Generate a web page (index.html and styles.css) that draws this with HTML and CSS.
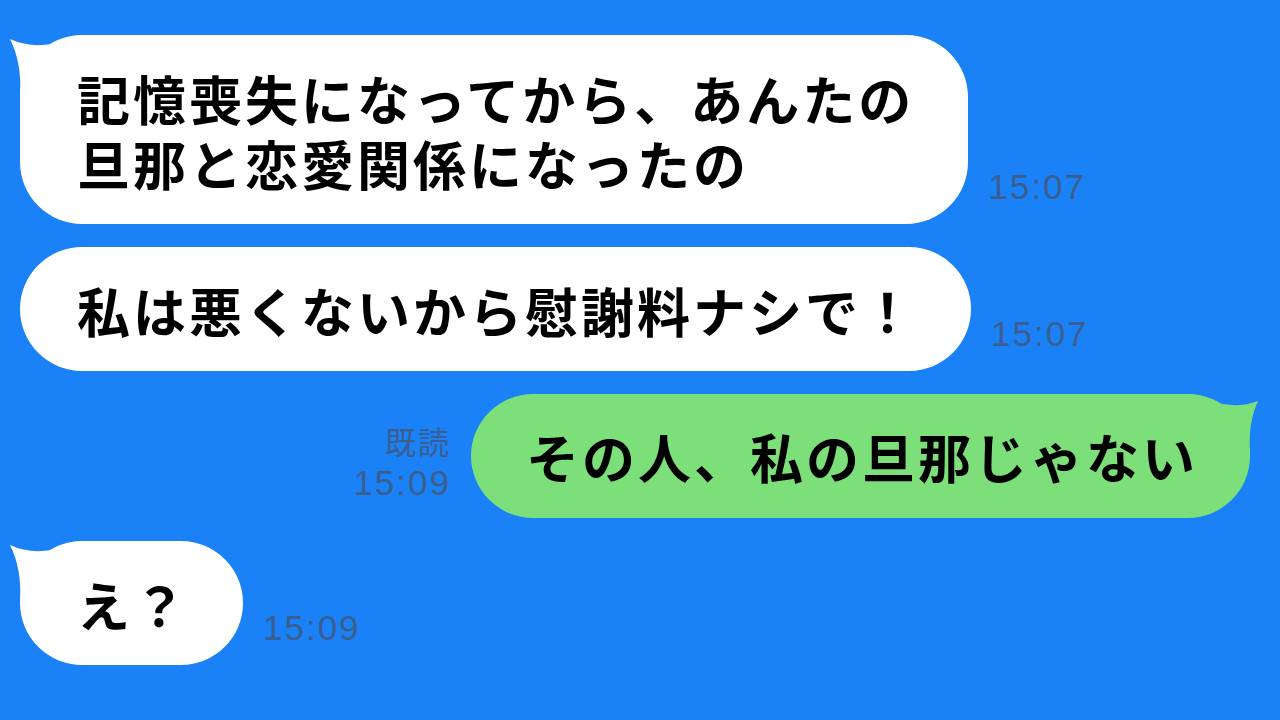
FILE: index.html
```html
<!DOCTYPE html>
<html lang="ja">
<head>
  <meta charset="UTF-8" />
  <meta name="viewport" content="width=device-width, initial-scale=1.0" />
  <title>トーク</title>
  <link rel="stylesheet" href="styles.css">
</head>
<body>
  <div class="chat">
    <div class="row">
      <div class="bubble them">
        <svg class="tail-left" width="70" height="60" viewBox="0 0 70 60"><path d="M0 4 Q30 18 70 0 L70 60 L10 60 Q12 28 0 4 Z" /></svg>
        <span class="text">記憶喪失になってから、あんたの<br>旦那と恋愛関係になったの</span>
      </div>
      <div class="meta">15:07</div>
    </div>

    <div class="row">
      <div class="bubble them"><span class="text">私は悪くないから慰謝料ナシで！</span></div>
      <div class="meta">15:07</div>
    </div>

    <div class="row mine">
      <div class="meta right">
        <span class="read">既読</span>
        <span>15:09</span>
      </div>
      <div class="bubble me">
        <svg class="tail-right" width="70" height="60" viewBox="0 0 70 60"><path d="M68 7 Q40 18 0 0 L0 60 L60 60 Q58 28 68 7 Z" /></svg>
        <span class="text">その人、私の旦那じゃない</span>
      </div>
    </div>

    <div class="row">
      <div class="bubble them">
        <svg class="tail-left" width="70" height="60" viewBox="0 0 70 60"><path d="M0 4 Q30 18 70 0 L70 60 L10 60 Q12 28 0 4 Z" /></svg>
        <span class="text">え？</span>
      </div>
      <div class="meta">15:09</div>
    </div>
  </div>
</body>
</html>
```

FILE: styles.css
```css
body {
  margin: 0;
  height: 100vh;
  background-color: #1a82f6;
  font-family: "Noto Sans CJK JP", "Liberation Sans", sans-serif;
  overflow: hidden;
}

.chat {
  display: flex;
  flex-direction: column;
  gap: 23px;
  padding: 35px 30px 0 20px;
}

.row {
  display: flex;
  align-items: flex-end;
  gap: 20px;
}

.row.mine {
  justify-content: flex-end;
  gap: 20px;
}

.bubble {
  position: relative;
  padding: 31px 54px 28px 57px;
  border-radius: 62px;
  font-size: 53px;
  font-weight: 700;
  line-height: 65px;
  letter-spacing: 3px;
  color: #000;
  white-space: nowrap;
}

.bubble .text {
  position: relative;
}

.bubble.them {
  background-color: #fff;
}

.bubble.them svg {
  fill: #fff;
}

.bubble.me {
  background-color: #7ddf79;
  padding: 30px 52px 29px 55px;
}

.bubble.me svg {
  fill: #7ddf79;
}

.tail-left {
  position: absolute;
  left: -10px;
  top: 0;
}

.tail-right {
  position: absolute;
  right: -10px;
  top: 0;
}

.meta {
  font-family: "Liberation Sans", "Noto Sans CJK JP", sans-serif;
  font-size: 35px;
  letter-spacing: 2px;
  color: #3a5e90;
  line-height: 40px;
  margin-bottom: 17px;
}

.meta.right {
  display: flex;
  flex-direction: column;
  align-items: flex-end;
  line-height: 42px;
  margin-bottom: 14px;
}

.meta .read {
  font-family: "Noto Sans CJK JP", sans-serif;
  font-size: 31px;
  letter-spacing: 2px;
}
```
